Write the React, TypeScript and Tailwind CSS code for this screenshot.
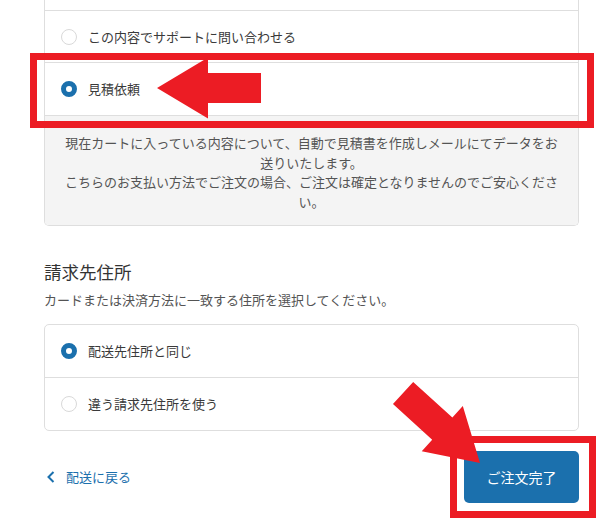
const font = { fontFamily: '"Noto Sans CJK JP", "Noto Sans", sans-serif' };

function Radio({ checked }: { checked: boolean }) {
  return checked ? (
    <span className="w-4 h-4 rounded-full border-[5px] border-[#1b70ad] bg-white shrink-0" />
  ) : (
    <span className="w-4 h-4 rounded-full border border-[#d9d9d9] bg-white shrink-0" />
  );
}

function OptionRow({ label, checked, height }: { label: string; checked: boolean; height: string }) {
  return (
    <div className={`flex items-center gap-[11px] pl-[16px] border-t border-[#dedede] ${height}`}>
      <Radio checked={checked} />
      <span className="text-[13px] text-[#3a3a3a]">{label}</span>
    </div>
  );
}

// Red call-out arrow, pointing along +x from the origin
const arrowPoints = '0,0 -51,-30.5 -51,-15 -104,-15 -104,15 -51,15 -51,30.5';

export default function App() {
  return (
    <div className="relative w-[606px] h-[531px] overflow-hidden bg-white" style={font}>
      <div className="w-[535px] ml-[44px]">
        {/* Payment method card (scrolled, top cut off) */}
        <div className="h-[10px] border-x border-[#dedede]" />
        <div className="border-x border-b border-[#dedede] rounded-b-[5px] overflow-hidden">
          <OptionRow label="この内容でサポートに問い合わせる" checked={false} height="h-[52px]" />
          <OptionRow label="見積依頼" checked={true} height="h-[53px]" />
          <div className="border-t border-[#dedede] bg-[#f4f4f4] px-[17px] pt-[17px] pb-[14px] text-center text-[13px] leading-[19.5px] text-[#545454]">
            <p>現在カートに入っている内容について、自動で見積書を作成しメールにてデータをお送りいたします。</p>
            <p>こちらのお支払い方法でご注文の場合、ご注文は確定となりませんのでご安心ください。</p>
          </div>
        </div>

        {/* Billing address */}
        <h2 className="mt-[34px] text-[17.5px] leading-[24px] text-[#333333]">請求先住所</h2>
        <p className="mt-[6px] text-[13px] leading-[20px] text-[#545454]">
          カードまたは決済方法に一致する住所を選択してください。
        </p>
        <div className="mt-[14px] border border-[#dedede] rounded-[5px] overflow-hidden [&>div:first-child]:border-t-0">
          <OptionRow label="配送先住所と同じ" checked={true} height="h-[52px]" />
          <OptionRow label="違う請求先住所を使う" checked={false} height="h-[53px]" />
        </div>

        {/* Footer actions */}
        <div className="mt-[20px] flex items-center justify-between">
          <a className="flex items-center gap-[11px] pl-[3px] -mt-[1px] text-[13px] text-[#1b70ad]">
            <svg width="8" height="12" viewBox="0 0 8 12" fill="none">
              <polyline points="6.5,1 1.5,6 6.5,11" stroke="currentColor" strokeWidth="2" />
            </svg>
            <span>配送に戻る</span>
          </a>
          <button className="w-[115px] h-[52px] rounded-[5px] bg-[#1b70ad] text-white text-[14px]">
            ご注文完了
          </button>
        </div>
      </div>

      {/* Annotation overlay: highlight boxes and arrows */}
      <div className="absolute left-[30px] top-[53px] w-[564px] h-[75px] border-[7px] border-[#ec1c24]" />
      <div className="absolute left-[450px] top-[436px] w-[146px] h-[82px] border-[7px] border-[#ec1c24]" />
      <svg className="absolute inset-0 pointer-events-none" width="606" height="531">
        <polygon points={arrowPoints} fill="#ec1c24" transform="translate(157 88) rotate(180)" />
        <polygon points={arrowPoints} fill="#ec1c24" transform="translate(480 463) rotate(42.3)" />
      </svg>
    </div>
  );
}
